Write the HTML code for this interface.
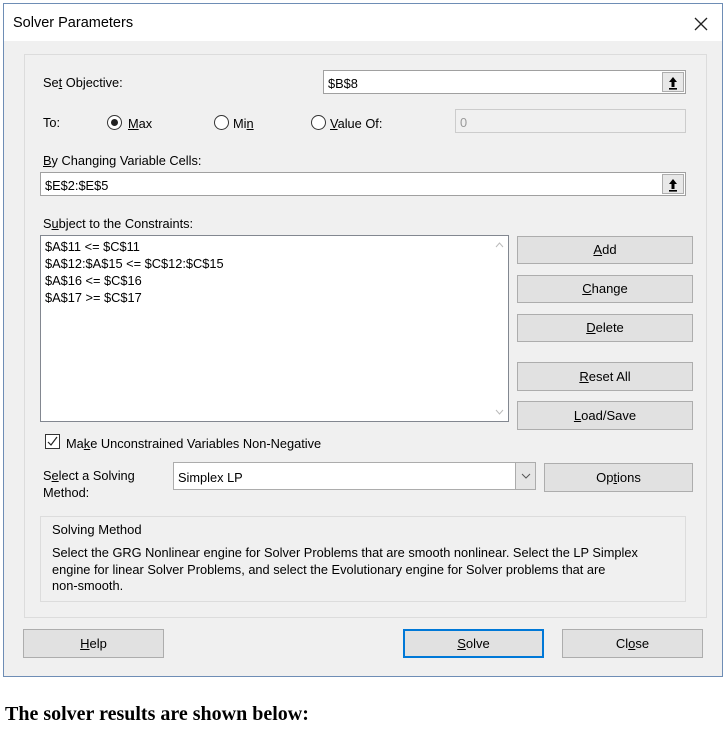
<!DOCTYPE html>
<html><head><meta charset="utf-8"><style>
*{box-sizing:border-box;margin:0;padding:0}
body{width:726px;height:730px;background:#fff;position:relative;overflow:hidden;font-family:"Liberation Sans",sans-serif;font-size:12.8px;color:#000}
.a{position:absolute;white-space:nowrap}
.dlg{position:absolute;left:3px;top:3px;width:720px;height:674px;border:1px solid #6e8db5;background:#f0f0f0}
.tb{position:absolute;left:0;top:0;width:718px;height:37px;background:#fff}
.panel{position:absolute;left:20px;top:50px;width:683px;height:564px;border:1px solid #dcdcdc}
.inp{position:absolute;background:#fff;border:1px solid #a0a0a0}
.btn{position:absolute;background:#e1e1e1;border:1px solid #adadad;text-align:center;font-size:13px}
.rb{position:absolute;width:15px;height:15px;border:1px solid #333;border-radius:50%;background:#fff}
.up{position:absolute;right:1px;top:1px;width:22px;bottom:1px;border:1px solid #adadad;background:#e8e8e8}
u{text-decoration:underline}
</style></head><body>
<div class="dlg">
 <div class="tb"></div>
 <div class="a" style="left:9px;top:11px;font-size:14.5px">Solver Parameters</div>
 <svg class="a" style="left:690px;top:13px" width="14" height="14"><path d="M1 1L13 13M13 1L1 13" stroke="#222" stroke-width="1.3"/></svg>
 <div class="panel"></div>
</div>
<div class="a" style="left:43px;top:75px">Se<u>t</u> Objective:</div>
<div class="inp" style="left:323px;top:70px;width:363px;height:24px"><span class="a" style="left:4px;top:5px">$B$8</span><div class="up"><svg width="20" height="20"><path d="M10 4L6 9H8.5V14H11.5V9H14Z" fill="#000"/><rect x="6" y="15" width="8" height="1.6" fill="#000"/></svg></div></div>
<div class="a" style="left:43px;top:115px">To:</div>
<div class="rb" style="left:107px;top:115px"><div style="position:absolute;left:3px;top:3px;width:7px;height:7px;border-radius:50%;background:#222"></div></div>
<div class="a" style="left:128px;top:116px"><u>M</u>ax</div>
<div class="rb" style="left:214px;top:115px"></div>
<div class="a" style="left:233px;top:116px">Mi<u>n</u></div>
<div class="rb" style="left:311px;top:115px"></div>
<div class="a" style="left:330px;top:116px"><u>V</u>alue Of:</div>
<div class="inp" style="left:455px;top:109px;width:231px;height:24px;background:#f0f0f0;border-color:#ccc"><span class="a" style="left:4px;top:5px;color:#999">0</span></div>
<div class="a" style="left:43px;top:153px"><u>B</u>y Changing Variable Cells:</div>
<div class="inp" style="left:40px;top:172px;width:646px;height:24px"><span class="a" style="left:4px;top:5px">$E$2:$E$5</span><div class="up"><svg width="20" height="20"><path d="M10 4L6 9H8.5V14H11.5V9H14Z" fill="#000"/><rect x="6" y="15" width="8" height="1.6" fill="#000"/></svg></div></div>
<div class="a" style="left:43px;top:216px">S<u>u</u>bject to the Constraints:</div>
<div class="inp" style="left:40px;top:235px;width:469px;height:187px;border-color:#828790">
 <div class="a" style="left:4px;top:2px;line-height:17px">$A$11 &lt;= $C$11<br>$A$12:$A$15 &lt;= $C$12:$C$15<br>$A$16 &lt;= $C$16<br>$A$17 &gt;= $C$17</div>
 <svg class="a" style="right:4px;top:6px" width="9" height="6"><path d="M1 5L4.5 1L8 5" stroke="#bbb" fill="none"/></svg>
 <svg class="a" style="right:4px;bottom:6px" width="9" height="6"><path d="M1 1L4.5 5L8 1" stroke="#bbb" fill="none"/></svg>
</div>
<div class="btn" style="left:517px;top:236px;width:176px;height:28px;line-height:26px"><u>A</u>dd</div>
<div class="btn" style="left:517px;top:275px;width:176px;height:28px;line-height:26px"><u>C</u>hange</div>
<div class="btn" style="left:517px;top:314px;width:176px;height:28px;line-height:26px"><u>D</u>elete</div>
<div class="btn" style="left:517px;top:362px;width:176px;height:29px;line-height:27px"><u>R</u>eset All</div>
<div class="btn" style="left:517px;top:401px;width:176px;height:29px;line-height:27px"><u>L</u>oad/Save</div>
<div class="a" style="left:45px;top:434px;width:15px;height:15px;border:1px solid #333;background:#fff"><svg width="13" height="13" style="position:absolute;left:0;top:0"><path d="M2 7L5 10L11 2" stroke="#222" fill="none" stroke-width="1.2"/></svg></div>
<div class="a" style="left:66px;top:436px">Ma<u>k</u>e Unconstrained Variables Non-Negative</div>
<div class="a" style="left:43px;top:467px;line-height:17px">S<u>e</u>lect a Solving<br>Method:</div>
<div class="inp" style="left:173px;top:462px;width:363px;height:28px;border-color:#acacac"><span class="a" style="left:4px;top:7px">Simplex LP</span><div class="a" style="right:0;top:0;width:20px;height:26px;border-left:1px solid #acacac;background:#e5e5e5"><svg width="20" height="26"><path d="M6 11L10 15L14 11" stroke="#555" fill="none"/></svg></div></div>
<div class="btn" style="left:544px;top:463px;width:149px;height:29px;line-height:28px">Op<u>t</u>ions</div>
<div class="a" style="left:40px;top:516px;width:646px;height:86px;border:1px solid #dcdcdc"></div>
<div class="a" style="left:52px;top:522px;font-size:13px">Solving Method</div>
<div class="a" style="left:52px;top:545px;line-height:16.7px">Select the GRG Nonlinear engine for Solver Problems that are smooth nonlinear. Select the LP Simplex<br>engine for linear Solver Problems, and select the Evolutionary engine for Solver problems that are<br>non-smooth.</div>
<div class="btn" style="left:23px;top:629px;width:141px;height:29px;line-height:28px"><u>H</u>elp</div>
<div class="btn" style="left:403px;top:629px;width:141px;height:29px;line-height:26px;border:2px solid #0078d7"><u>S</u>olve</div>
<div class="btn" style="left:562px;top:629px;width:141px;height:29px;line-height:28px">Cl<u>o</u>se</div>
<div class="a" style="left:5px;top:703px;font-family:'Liberation Serif',serif;font-weight:bold;font-size:20px">The solver results are shown below:</div>
</body></html>
